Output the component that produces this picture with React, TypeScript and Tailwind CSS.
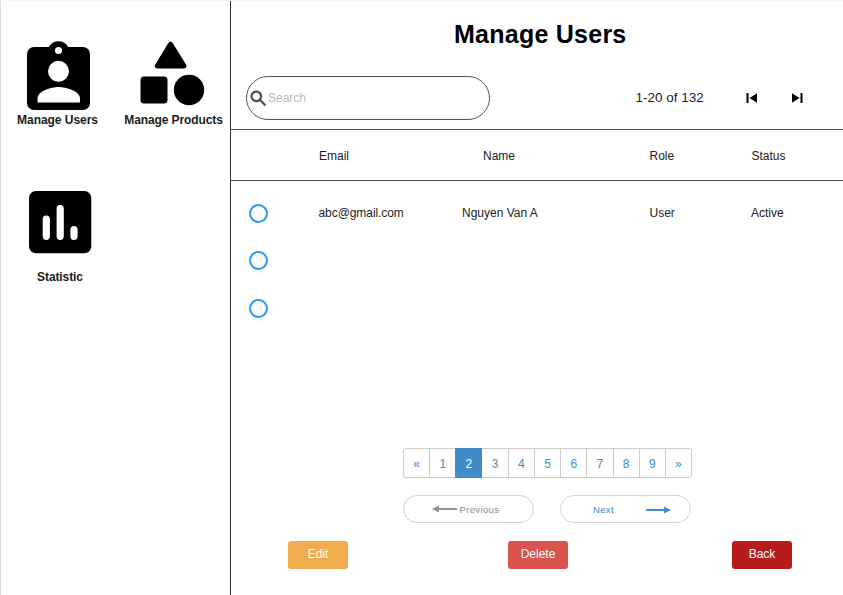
import React from "react";

const pages = ["«", "1", "2", "3", "4", "5", "6", "7", "8", "9", "»"];

function ClipboardUserIcon() {
  return (
    <svg className="block h-[70px] w-[64px]" viewBox="0 0 64 70">
      <path d="M7 7H21.8A11 11 0 0 1 41.2 7H56a7 7 0 0 1 7 7V63a7 7 0 0 1-7 7H7a7 7 0 0 1-7-7V14a7 7 0 0 1 7-7Z" />
      <circle cx="31.5" cy="10.5" r="3.5" fill="white" />
      <circle cx="31.5" cy="31.3" r="10.5" fill="white" />
      <path d="M10.500 62.500V58.500C10.500 51 24 47 31.500 47S53 51 53 58.500V62.500Z" fill="white" />
    </svg>
  );
}

function ShapesIcon() {
  return (
    <svg className="block h-[66px] w-[66px]" viewBox="0 0 66 66">
      <path d="M28.200 2.200Q30.500-1.400 32.800 2.200L46 23.500Q47.600 27 44 27.500H17.300Q13.700 27 15.300 23.500Z" />
      <rect x="0.5" y="35.5" width="27" height="27" rx="3.5" />
      <circle cx="49" cy="49" r="15.2" />
    </svg>
  );
}

function StatisticIcon() {
  return (
    <svg className="block h-[63px] w-[63px]" viewBox="0 0 63 63">
      <rect width="62.3" height="62.3" rx="7" />
      <g stroke="white" strokeWidth="7.2" strokeLinecap="round">
        <path d="M17.300 28V45.300M31.200 17.600V45.300M45 38.500V45.300" />
      </g>
    </svg>
  );
}

function Sidebar() {
  return (
    <aside className="flex h-full w-[230px] shrink-0 flex-col border-l border-[#d8d8d8] text-xs font-bold text-[#1c1c1c]">
      <div className="flex h-[189px] pt-[39px]">
        <div className="flex w-[113px] flex-col items-center">
          <div className="h-[72px] pl-[3px]"><ClipboardUserIcon /></div>
          <span className="leading-4 tracking-[-0.05px]">Manage Users</span>
        </div>
        <div className="flex w-[115px] flex-col items-center pl-1">
          <div className="h-[72px] pt-px pr-[2px]"><ShapesIcon /></div>
          <span className="whitespace-nowrap leading-4 tracking-[-0.1px]">Manage Products</span>
        </div>
      </div>
      <div className="flex w-[118px] flex-col items-center pt-px">
        <StatisticIcon />
        <span className="mt-[15px] leading-4 tracking-[-0.1px]">Statistic</span>
      </div>
    </aside>
  );
}

function Radio() {
  return <span className="block h-[19px] w-[19px] rounded-full border-2 border-[#2b9af3] bg-[#fafafa]" />;
}

export default function App() {
  return (
    <div className="flex h-[595px] w-[843px] overflow-hidden border-t border-[#f5f5f5] bg-white font-['Liberation_Sans',Arial,sans-serif] text-xs text-[#222]">
      <Sidebar />
      <main className="flex min-w-0 flex-1 flex-col border-l border-[#333]">
        <header className="h-[129px] border-b border-[#555]">
          <h1 className="h-[75px] pt-[17px] pl-[223px] text-[25px] leading-8 font-bold tracking-[0.25px] text-black">Manage Users</h1>
          <div className="flex h-[44px] items-center pl-[15px]">
            <label className="flex h-[44px] w-[243.5px] items-center rounded-full border border-[#555] pl-[1px]">
              <svg className="h-[21px] w-[21px]" viewBox="0 0 24 24" fill="#444" stroke="#444" strokeWidth="0.4">
                <path d="M15.500 14h-.79l-.28-.27A6.471 6.471 0 0 0 16 9.500 6.500 6.500 0 1 0 9.500 16c1.610 0 3.090-.59 4.230-1.570l.27.28v.79l5 4.990L20.490 19zm-6 0C7.010 14 5 11.990 5 9.500S7.010 5 9.500 5 14 7.010 14 9.500 11.990 14 9.500 14" />
              </svg>
              <span className="-ml-px text-[#b8b8b8]">Search</span>
            </label>
            <span className="ml-[146px] w-[110px] whitespace-nowrap text-[13.5px]">1-20 of 132</span>
            <svg className="h-3 w-3" viewBox="0 0 12 12"><path d="M.5 1H2.500V11H.5ZM11 1.300V10.700L3.500 6Z" /></svg>
            <svg className="ml-[33.5px] h-3 w-3" viewBox="0 0 12 12"><path d="M9.500 1H11.500V11H9.500ZM1 1.300V10.700L8.500 6Z" /></svg>
          </div>
        </header>
        <div className="flex h-[51px] items-center border-b border-[#555] pt-0.5">
          <span className="w-[252px] pl-[88px]">Email</span>
          <span className="w-[166.5px]">Name</span>
          <span className="w-[102px]">Role</span>
          <span>Status</span>
        </div>
        <section className="h-[267px] pt-[9px]">
          <div className="flex h-[47px] items-center pl-[18px]">
            <Radio />
            <span className="ml-[50.5px] w-[143.5px] pb-0.5 tracking-[-0.07px]">abc@gmail.com</span>
            <span className="w-[187.5px] pb-0.5">Nguyen Van A</span>
            <span className="w-[101.5px] pb-0.5">User</span>
            <span className="pb-0.5">Active</span>
          </div>
          <div className="flex h-[47px] items-center pl-[18px]"><Radio /></div>
          <div className="flex h-[48px] items-center pl-[18px]"><Radio /></div>
        </section>
        <nav className="ml-[172px] flex h-[30px] w-[289px] rounded-[3px] border border-[#ccc] text-[#428bca]">
          {pages.map((p, i) => (
            <span
              key={p}
              className={
                p === "2"
                  ? "-my-px flex w-[27px] items-center justify-center bg-[#428bca] pt-0.5 text-white"
                  : i === 0
                    ? "flex flex-1 items-center justify-center pt-0.5"
                    : i === 3
                      ? "flex w-[25.5px] items-center justify-center pt-0.5"
                      : "flex flex-1 items-center justify-center border-l border-[#ccc] pt-0.5"
              }
            >
              {p}
            </span>
          ))}
        </nav>
        <div className="mt-[17px] flex gap-[26px] pl-[172px] text-[9.5px] tracking-[0.35px]">
          <button className="flex h-7 w-[131px] items-center rounded-full border border-[#d2d2d2] pl-[27.5px] text-[#888]">
            <svg className="mr-[3px] h-2 w-[25px]" viewBox="0 0 25 8" fill="#929292"><path d="M0 4L7 .5V3H25V5H7V7.500Z" /></svg>
            <span className="pt-0.5">Previous</span>
          </button>
          <button className="flex h-7 w-[131px] items-center rounded-full border border-[#d2d2d2] pl-8 text-[#4a7fc0]">
            <span className="w-[53px] pt-0.5 text-left">Next</span>
            <svg className="mt-px h-2 w-[25px]" viewBox="0 0 25 8" fill="#428bca"><path d="M25 4L18 .5V3H0V5H18V7.500Z" /></svg>
          </button>
        </div>
        <div className="mt-[18px] flex pl-[57px] text-white">
          <button className="h-7 w-[60px] rounded-[3px] bg-[#f0ad4e] pb-[3px]">Edit</button>
          <button className="ml-[160px] h-7 w-[60px] rounded-[3px] bg-[#d9534f] pb-[3px]">Delete</button>
          <button className="ml-[164px] h-7 w-[60px] rounded-[3px] bg-[#b71c1c] pb-[3px]">Back</button>
        </div>
      </main>
    </div>
  );
}
